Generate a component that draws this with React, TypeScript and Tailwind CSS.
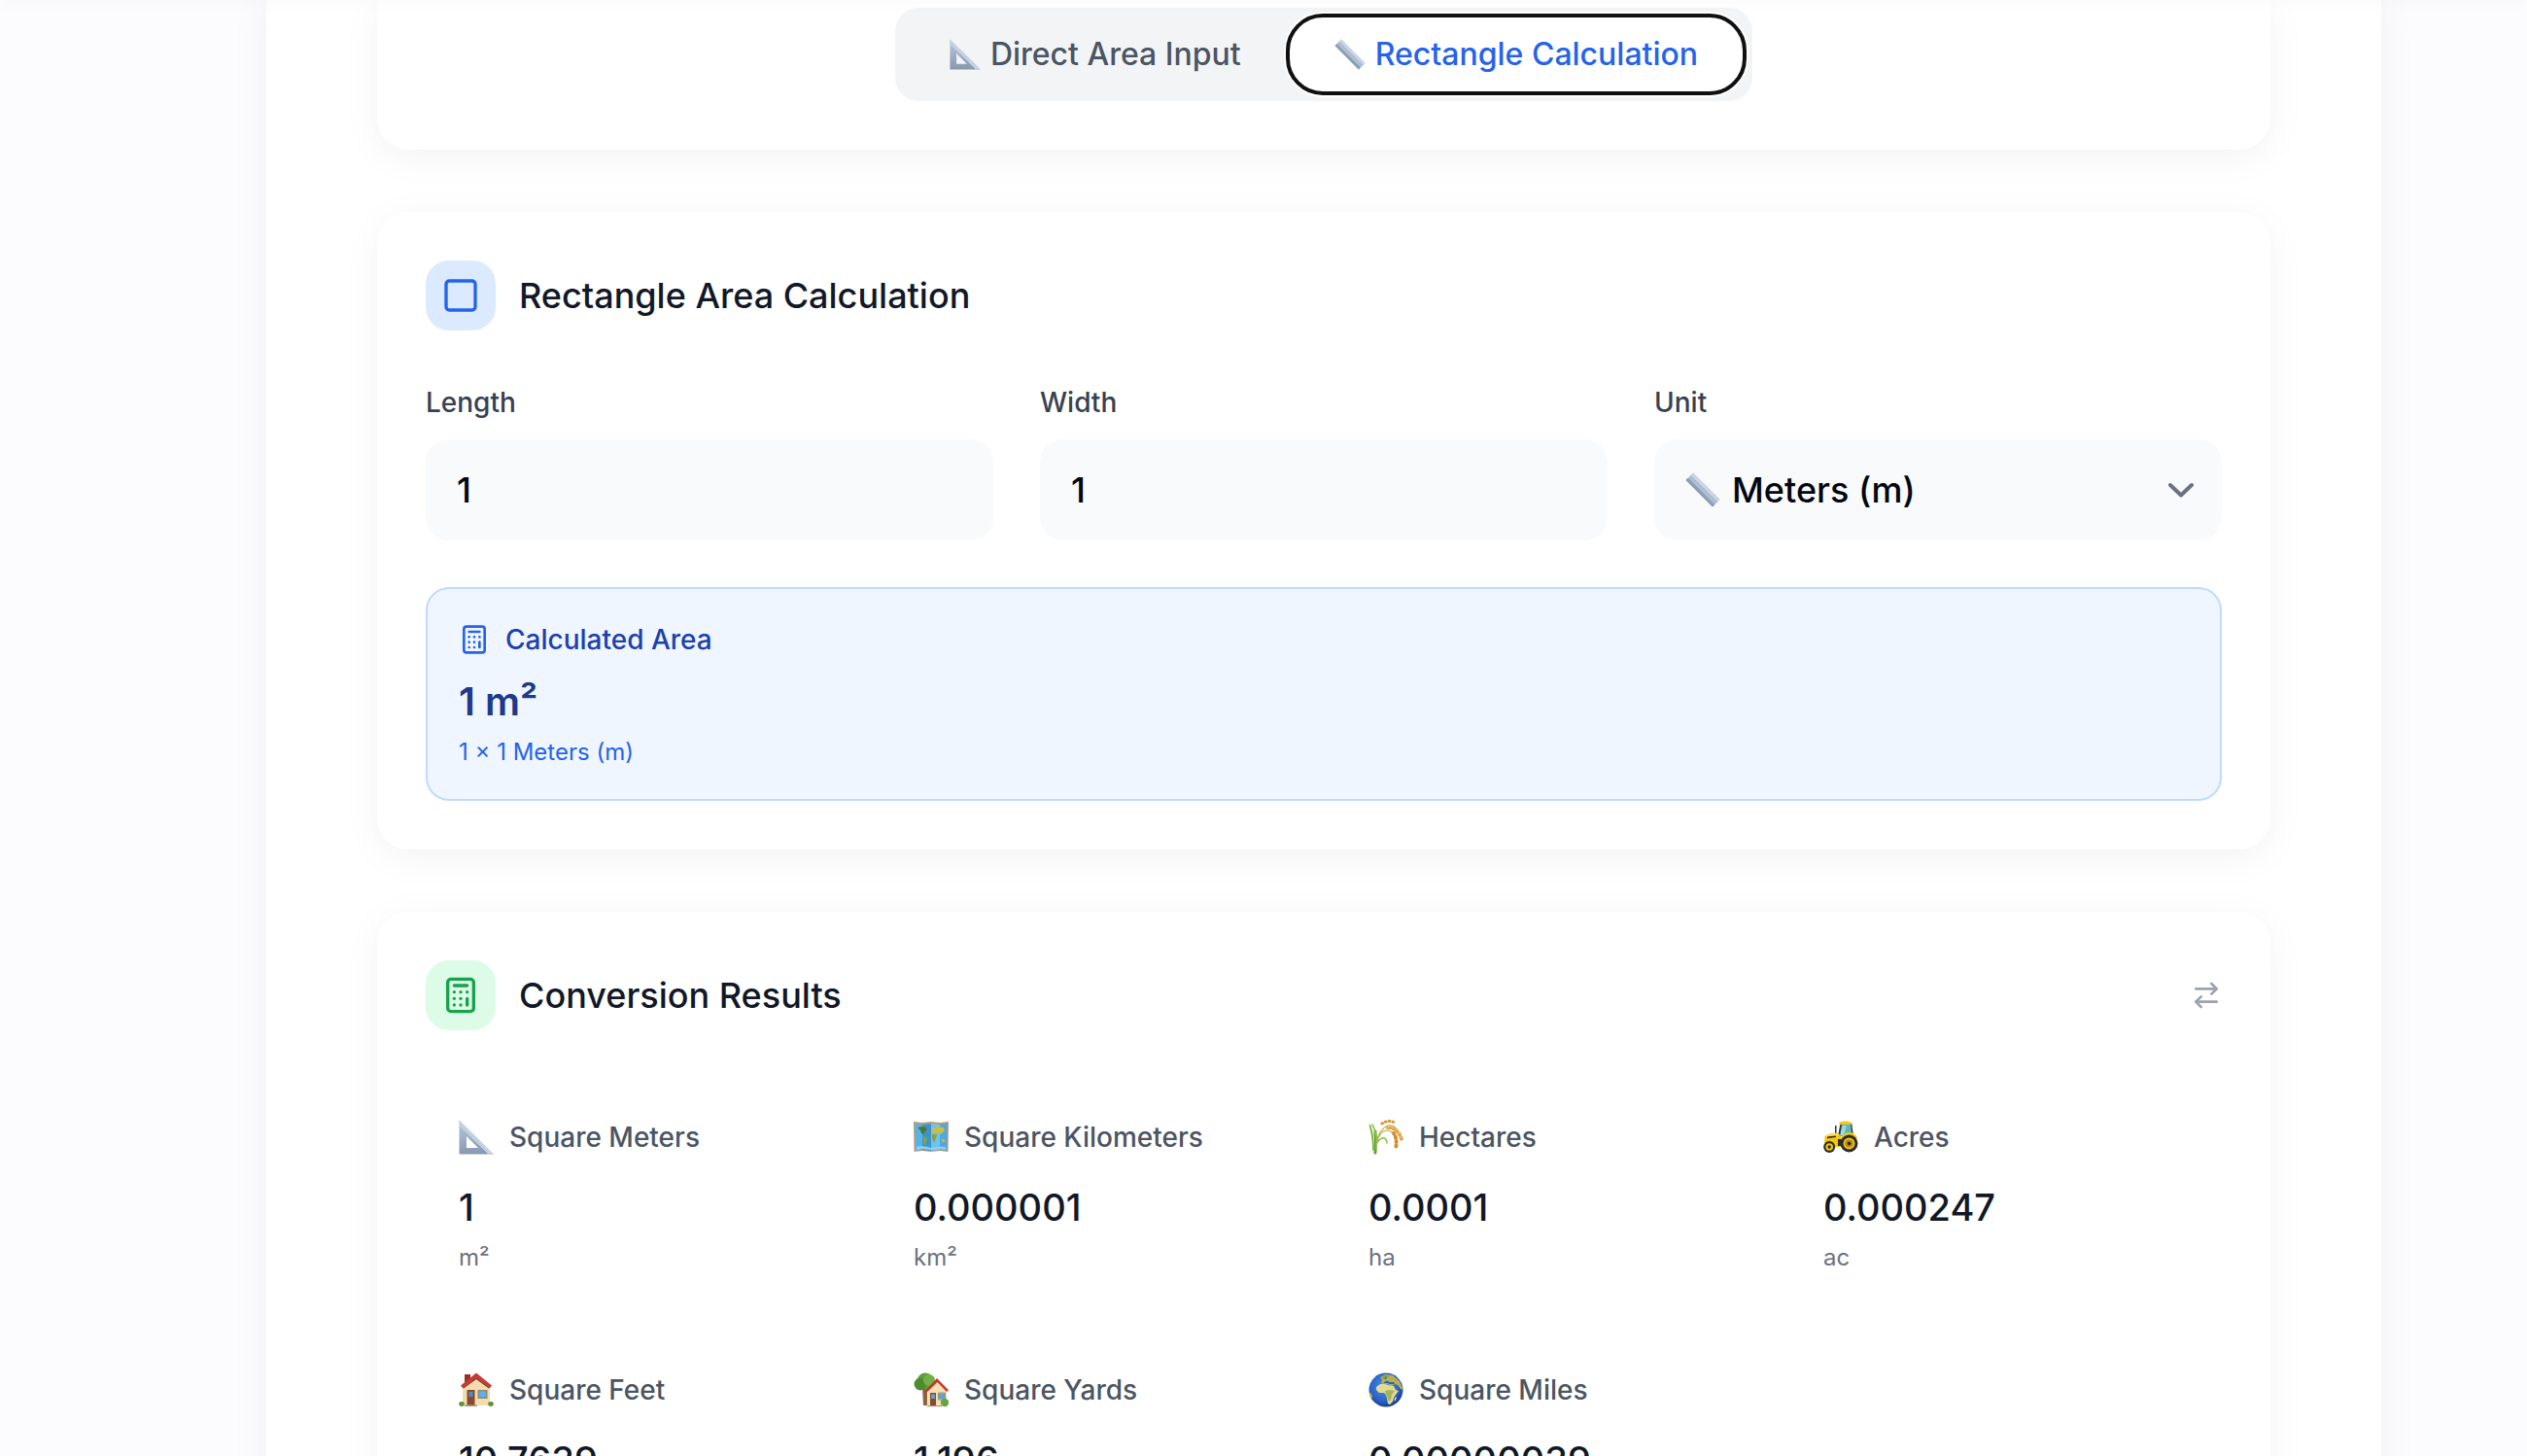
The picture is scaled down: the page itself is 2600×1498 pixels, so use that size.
import { useState } from 'react';
import type { ReactNode } from 'react';
import { ArrowRightLeft, Calculator, Square } from 'lucide-react';

type IconProps = { className?: string };

/* ---------- Unit illustrations ---------- */

function TriangleRuler({ className }: IconProps) {
  return (
    <svg viewBox="0 0 36 36" className={className} aria-hidden="true">
      <defs>
        <linearGradient id="tri" x1="0" y1="0" x2="0" y2="1">
          <stop offset="0" stopColor="#b9c9dc" />
          <stop offset="1" stopColor="#8798af" />
        </linearGradient>
      </defs>
      <path fill="url(#tri)" fillRule="evenodd" d="M.5.5 35.5 35.5H.5ZM8 17v12h12Z" />
      <path fill="#c6d4e3" d="M.5.5 35.5 35.5h-5L.5 6Z" />
      <path stroke="#9eb0c5" strokeWidth=".8" strokeDasharray="1 2" d="M2 5l28 28" />
    </svg>
  );
}

function StraightRuler({ className }: IconProps) {
  return (
    <svg viewBox="0 0 36 36" className={className} aria-hidden="true">
      <path fill="#aebfd2" d="M8 .5 35.500 28 28 35.500.5 8Z" />
      <path fill="#c9d6e4" d="M8 .5 35.500 28l-2.300 2.300L5.500 3Z" />
      <path fill="#8c9eb6" d="M2.800 5.800 30.300 33.200 28 35.500.5 8Z" />
      <path stroke="#8d9fb5" strokeWidth=".8" strokeDasharray="1 2" d="M6 4l27 27" />
    </svg>
  );
}

function WorldMap({ className }: IconProps) {
  return (
    <svg viewBox="0 0 36 36" className={className} aria-hidden="true">
      <path fill="#b99b78" d="M0 2 9 3 18 2l9 1 9-1-.5 31-8.500-1-9 1-9-1-8.500 1Z" />
      <path fill="#58b4e8" d="M1.500 4 9 5v26l-7 1Z" />
      <path fill="#3c93cf" d="m9 5 9-1v28l-9-1Z" />
      <path fill="#6ec3f0" d="m18 4 9 1v26l-9 1Z" />
      <path fill="#4ea9df" d="m27 5 7.500-1-.5 28-7-1Z" />
      <path fill="#4d7a2a" d="M4 8l5-1 5 2-2 3-2 3-2-1-1-3Z" />
      <path fill="#86a83a" d="m10 17 4 2-1 4-2 4-1-5Z" />
      <path fill="#c4c04a" d="m19 9 5-2 7 1 1 3-4 4-4-2-4 2-1-3Z" />
      <path fill="#8aa33b" d="m19 15 5 0-1 4-2 5-2-5Z" />
      <path fill="#d4b44c" d="m29 20 3 0 0 3-3 0Z" />
      <path fill="#8fd0ef" d="M3 28q7-2 15 1 8-2 15-1v3l-6-1-9 1-9-1-6 1Z" />
    </svg>
  );
}

function RiceSheaf({ className }: IconProps) {
  return (
    <svg viewBox="0 0 36 36" className={className} fill="none" strokeLinecap="round" aria-hidden="true">
      <path stroke="#5fa52f" strokeWidth="3" d="M7 34Q8 22 7 12" />
      <path stroke="#7dbb43" strokeWidth="2" d="M5 31Q5 16 1.500 6" />
      <path stroke="#8cc152" strokeWidth="1.600" d="M8 30Q10 16 4 5M8 25q4-7 8-6 3 1 3 5" />
      <path stroke="#b5b04a" strokeWidth="1.200" d="M8 25Q10 10 20 6q9-2 13 12M8 25q3-13 10-14 8 0 10 8" />
      <path stroke="#d99a3a" strokeWidth="3.200" strokeDasharray=".5 3.400" d="M14 4q8-5 14 0" />
      <path stroke="#e2a447" strokeWidth="4" strokeDasharray="1 3.600" d="M20 8q10 0 14 12" />
      <path stroke="#d08f33" strokeWidth="4" strokeDasharray="1 3.400" d="M26 14q4 6 2 16" />
      <path stroke="#edc37c" strokeWidth="1.400" strokeDasharray="1 3.600" d="M20 7q10 0 14 12" />
    </svg>
  );
}

function Tractor({ className }: IconProps) {
  return (
    <svg viewBox="0 0 36 36" className={className} aria-hidden="true">
      <path fill="#55b7c4" d="M18 5h10l2 12H15Z" />
      <path fill="#9adbe0" d="M20 6h4l-3 10h-4Z" />
      <path fill="#333" d="M15 17 17.500 4h1.500l-2 13ZM28 4h1.300L31 17h-1.500ZM12 6h1.500v9H12Z" />
      <path fill="#f5c614" d="M16.500 2.500q6-2 12 0V5h-12Z" />
      <path fill="#f5c614" d="M1.500 17q6-4 14-3l3 4q3-5 9-5 6 1 7.500 6l-9 4-9 5h-5L1 24Z" />
      <path fill="#ffe25a" d="M3 16.500q6-3 12-2l1 2q-7-1-13 1Z" />
      <path fill="#2e2e2e" d="M4 17.500l9-1v1.500l-9 1.200ZM15 20h5l-2 7h-3Z" />
      <circle cx="26.500" cy="24.500" r="9" fill="#2b2b2b" />
      <circle cx="26.500" cy="24.500" r="6" fill="#f3c313" />
      <circle cx="26.500" cy="24.500" r="4" fill="#b8880c" />
      <circle cx="26.500" cy="24.500" r="1.800" fill="#222" />
      <circle cx="6.200" cy="28" r="6" fill="#2b2b2b" />
      <circle cx="6.200" cy="28" r="3.800" fill="#f3c313" />
      <circle cx="6.200" cy="28" r="1.700" fill="#2b2b2b" />
    </svg>
  );
}

function House({ className }: IconProps) {
  return (
    <svg viewBox="0 0 36 36" className={className} aria-hidden="true">
      <path fill="#9c2f25" d="M6 2h6v9H6Z" />
      <path fill="#f3dcae" d="M4 15 18 4l14 11v19H4Z" />
      <path fill="#c73a30" d="M18 .5 2 13.500l2 2.500L18 5l14 11 2-2.500Z" />
      <path fill="#8c2a22" d="M4 16 18 5l14 11-1 .6L18 7 5 16.600Z" />
      <path fill="#8b4a2c" d="M8.500 18h8v16h-8Z" />
      <path fill="#4b8fc9" d="M10.500 20h4v5h-4Z" />
      <path fill="#8a8a80" d="M19.500 18h10v9h-10Z" />
      <path fill="#5fb0e6" d="M21 19.500h7v6h-7Z" />
      <path fill="#a59c8a" d="M6 33.500h13V35H6Z" />
      <ellipse cx="3" cy="32.500" rx="2.800" ry="2.400" fill="#5c9434" />
      <ellipse cx="33" cy="32.500" rx="2.800" ry="2.400" fill="#5c9434" />
    </svg>
  );
}

function HouseWithTree({ className }: IconProps) {
  return (
    <svg viewBox="0 0 36 36" className={className} aria-hidden="true">
      <path fill="#8a6443" d="M9 15h5v19h-4Z" />
      <circle cx="12" cy="9" r="8.500" fill="#5f9f3a" />
      <circle cx="7" cy="12" r="6.500" fill="#4e8c30" />
      <circle cx="16" cy="8" r="6" fill="#73b048" />
      <path fill="#f6dfb4" d="M14.500 19 25 9l9 10v15H14.500Z" />
      <path fill="#c5372d" d="M24 6 11 19.500l2 1.500L24.500 10 34 20l2-1.800Z" />
      <path fill="#8b4a2c" d="M17 21h6v13h-6Z" />
      <path fill="#5aa5db" d="M18 22.500h4V27h-4ZM26 21.500h6v6h-6Z" />
      <path fill="none" stroke="#a98e68" d="M25.500 21h7v7h-7Z" />
      <circle cx="32" cy="31" r="4.200" fill="#6aa63f" />
      <path fill="#a59c8a" d="M14 34h15v1.200H14Z" />
    </svg>
  );
}

function Globe({ className }: IconProps) {
  return (
    <svg viewBox="0 0 36 36" className={className} aria-hidden="true">
      <defs>
        <radialGradient id="sea" cx=".45" cy=".4" r=".6">
          <stop offset="0" stopColor="#4b92e6" />
          <stop offset=".7" stopColor="#2a62c6" />
          <stop offset="1" stopColor="#1c3f94" />
        </radialGradient>
        <clipPath id="disc">
          <circle cx="18" cy="18" r="17.500" />
        </clipPath>
      </defs>
      <circle cx="18" cy="18" r="17.500" fill="url(#sea)" />
      <g clipPath="url(#disc)">
        <path fill="#b7b04c" d="m12 5 5-3 8 1 7 6 4 9-3-1-3-4-3-1-3 2-4-2-4 0-3-1 1-3Z" />
        <path fill="#8ba34d" d="m13 5 5-3 3 1-2 2-4 2Z" />
        <path fill="#dfdc92" d="m8 15 4-3 5 0 3 1 6 1 2 4 3 1-3 4-2 3-1 4-3 3-2-1-1-5-1-4-2-2-5 0-3-3Z" />
        <path fill="#a5b455" d="m17 19 5-1 5 1-3 4-1 5-2 2-2-5Z" />
        <path fill="#2a62c6" d="m16 10 3-1.500 3 1.500 4 0 1 2-5 0-3-1-3 0ZM17 5l2-1-1 3-1.500 0Z" />
        <path fill="#c8b23c" d="m0 20 3 2 1 3-2 4Z" />
        <path fill="#dfdc92" d="m27 26 2-1-1 4-1.500 0Z" />
      </g>
    </svg>
  );
}

/* ---------- Data ---------- */

const results = [
  { name: 'Square Meters', value: '1', unit: 'm²', Icon: TriangleRuler },
  { name: 'Square Kilometers', value: '0.000001', unit: 'km²', Icon: WorldMap },
  { name: 'Hectares', value: '0.0001', unit: 'ha', Icon: RiceSheaf },
  { name: 'Acres', value: '0.000247', unit: 'ac', Icon: Tractor },
  { name: 'Square Feet', value: '10.7639', unit: 'ft²', Icon: House },
  { name: 'Square Yards', value: '1.196', unit: 'yd²', Icon: HouseWithTree },
  { name: 'Square Miles', value: '0.00000039', unit: 'mi²', Icon: Globe },
];

/* ---------- Building blocks ---------- */

function Card({ children }: { children: ReactNode }) {
  return (
    <section className="rounded-[32px] bg-white p-[50px] shadow-[0_8px_40px_rgba(0,0,0,0.05)]">
      {children}
    </section>
  );
}

type NumberFieldProps = {
  id: string;
  label: string;
  value: string;
  onChange: (value: string) => void;
};

function NumberField({ id, label, value, onChange }: NumberFieldProps) {
  return (
    <div>
      <label htmlFor={id} className="mb-3 block text-[28px] leading-[52px] font-medium text-[#374151]">
        {label}
      </label>
      <input
        id={id}
        type="text"
        inputMode="decimal"
        value={value}
        onChange={(e) => onChange(e.target.value)}
        className="h-26 w-full rounded-3xl bg-[#f9fafb] px-8 text-4xl font-medium text-gray-950 outline-none"
      />
    </div>
  );
}

export default function App() {
  const [length, setLength] = useState('1');
  const [width, setWidth] = useState('1');

  return (
    <div className="relative h-screen overflow-hidden bg-[#fcfcfe] pr-[150px] pl-[274px] font-['Inter','Liberation_Sans',sans-serif]">
      {/* Shadow cast by the bar above the scrolled content */}
      <div className="absolute inset-x-0 -top-2 z-10 h-2 shadow-[0_2px_16px_rgba(0,0,0,0.04)]" />

      <main className="min-h-screen bg-white px-[114px] shadow-[0_0_40px_rgba(0,0,0,0.05)]">
        {/* Mode switch */}
        <section className="mb-16 flex justify-center rounded-b-[32px] bg-white px-[50px] pt-2 pb-[50px] shadow-[0_8px_40px_rgba(0,0,0,0.05)]">
          <div className="flex rounded-3xl bg-[#f3f4f6] p-2">
            <button
              type="button"
              className="flex h-20 items-center gap-2.5 rounded-3xl px-12 text-[32px] font-medium text-[#4b5563]"
            >
              <TriangleRuler className="size-8" />
              Direct Area Input
            </button>
            <button
              type="button"
              className="flex h-20 items-center gap-2.5 rounded-[36px] bg-white px-12 text-[32px] font-medium text-[#2563eb] shadow-[0_0_0_4px_#fff] outline-4 -outline-offset-2 outline-[#101010]"
            >
              <StraightRuler className="size-8" />
              Rectangle Calculation
            </button>
          </div>
        </section>

        <div className="space-y-16">
          <Card>
            <div className="mb-12 flex items-center gap-6">
              <div className="flex size-18 items-center justify-center rounded-3xl bg-[#dbeafe]">
                <Square className="size-10 text-[#2563eb]" />
              </div>
              <h2 className="text-4xl font-medium text-[#111827]">Rectangle Area Calculation</h2>
            </div>

            <div className="grid grid-cols-3 gap-12">
              <NumberField id="length" label="Length" value={length} onChange={setLength} />
              <NumberField id="width" label="Width" value={width} onChange={setWidth} />
              <div>
                <label htmlFor="unit" className="mb-3 block text-[28px] leading-[52px] font-medium text-[#374151]">
                  Unit
                </label>
                <div className="relative">
                  <select
                    id="unit"
                    className="h-26 w-full appearance-none rounded-3xl bg-[#f9fafb] pr-20 pl-20 text-4xl font-medium text-gray-950 outline-none"
                  >
                    <option>Meters (m)</option>
                  </select>
                  <StraightRuler className="pointer-events-none absolute top-1/2 left-8 size-9 -translate-y-1/2" />
                  <svg
                    viewBox="0 0 28 16"
                    fill="none"
                    className="pointer-events-none absolute top-1/2 right-7 h-4 w-7 -translate-y-1/2 stroke-[#6b7280]"
                    aria-hidden="true"
                  >
                    <path d="m3 3 11 10.500L25 3" strokeWidth="4" strokeLinecap="round" strokeLinejoin="round" />
                  </svg>
                </div>
              </div>
            </div>

            <div className="mt-12 rounded-3xl border-2 border-[#bfdbfe] bg-[#eff6ff] p-8">
              <div className="flex items-center gap-4">
                <Calculator className="size-8 text-[#2563eb]" />
                <span className="text-[28px] leading-10 font-medium text-[#1e40af]">Calculated Area</span>
              </div>
              <p className="mt-4 text-[40px] leading-14 font-semibold text-[#1e3a8a]">1 m²</p>
              <p className="mt-2 text-2xl text-[#2563eb]">1 × 1 Meters (m)</p>
            </div>
          </Card>

          <Card>
            <div className="mb-12 flex items-center justify-between">
              <div className="flex items-center gap-6">
                <div className="flex size-18 items-center justify-center rounded-3xl bg-[#dcfce7]">
                  <Calculator className="size-10 text-[#16a34a]" />
                </div>
                <h2 className="text-4xl font-medium text-[#111827]">Conversion Results</h2>
              </div>
              <ArrowRightLeft className="size-8 text-[#9ca3af]" />
            </div>

            <div className="grid grid-cols-4 gap-6">
              {results.map(({ name, value, unit, Icon }) => (
                <div key={name} className="p-[34px]">
                  <div className="flex items-center gap-4">
                    <Icon className="size-9" />
                    <span className="text-[28px] leading-14 font-medium text-[#4b5563]">{name}</span>
                  </div>
                  <p className="mt-4 text-[38px] leading-14 font-medium text-[#111827]">{value}</p>
                  <p className="mt-2 text-2xl text-[#6b7280]">{unit}</p>
                </div>
              ))}
            </div>
          </Card>
        </div>
      </main>
    </div>
  );
}
